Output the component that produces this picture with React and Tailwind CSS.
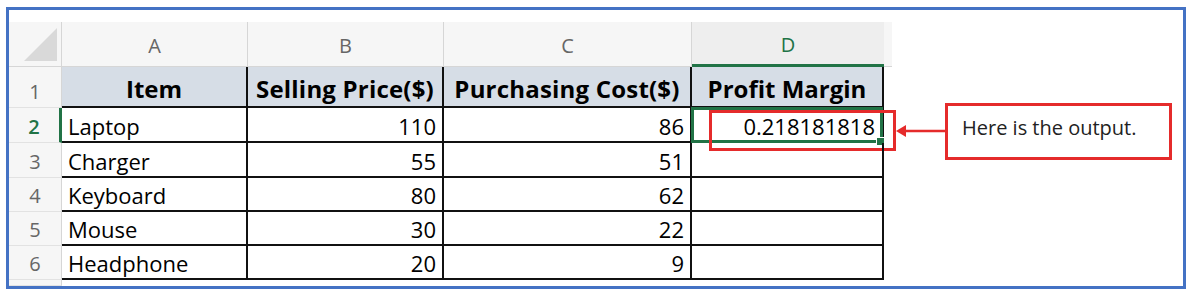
import React from "react";

/**
 * Spreadsheet screenshot — profit margin example with a callout
 * pointing at the computed D2 value.
 */
const rows = [
  { n: 2, item: "Laptop", price: 110, cost: 86, margin: "0.218181818", h: "h-[35px]" },
  { n: 3, item: "Charger", price: 55, cost: 51, h: "h-[35px]" },
  { n: 4, item: "Keyboard", price: 80, cost: 62, h: "h-[34px]" },
  { n: 5, item: "Mouse", price: 30, cost: 22, h: "h-[34px]" },
  { n: 6, item: "Headphone", price: 20, cost: 9, h: "h-[34px]" },
];

const font = { fontFamily: '"Open Sans", "Liberation Sans", sans-serif' };

const RowHead = ({ children, active, className = "" }) => (
  <div
    className={`w-[53px] shrink-0 flex items-end justify-center pb-[2px] leading-none bg-[#f6f6f6] border-b border-[#e2e2e2] text-[20px] font-normal ${
      active ? "text-[#217346] font-semibold border-r-[3px] border-r-[#217346]" : "text-[#666] border-r border-r-[#d6d6d6]"
    } ${className}`}
  >
    <span className="pb-[3px]">{children}</span>
  </div>
);

const App = () => {
  return (
    <div className="w-[1192px] h-[297px] bg-white pt-[7px] pl-[6px]" style={font}>
      <div className="w-[1180px] h-[282px] border-[3px] border-[#4472c4] flex items-start pt-[12px]">
        {/* Sheet */}
        <div className="flex flex-col h-full">
          {/* Column headers */}
          <div className="flex h-[45px] text-[20px] text-[#666]">
            <div className="w-[53px] relative bg-[#f6f6f6] border-r border-b border-[#d6d6d6]">
              <svg className="absolute right-[4px] bottom-[5px]" width="33" height="33" viewBox="0 0 33 33">
                <polygon points="33,0 33,33 0,33" fill="#d9d9d9" />
              </svg>
            </div>
            <div className="w-[186px] flex items-center justify-center pt-[4px] bg-[#f6f6f6] border-r border-b border-[#d6d6d6]">A</div>
            <div className="w-[196px] flex items-center justify-center pt-[4px] bg-[#f6f6f6] border-r border-b border-[#d6d6d6]">B</div>
            <div className="w-[248px] flex items-center justify-center pt-[4px] bg-[#f6f6f6] border-r border-b border-[#d6d6d6]">C</div>
            <div className="w-[192px] flex items-center justify-center pt-[4px] bg-[#eeeeee] border-b-[3px] border-[#217346] text-[#217346]">D</div>
            <div className="w-[8px] bg-[#f6f6f6] border-b border-[#d6d6d6]" />
          </div>

          {/* Row 1: headings */}
          <div className="flex h-[41px] font-bold text-[24px] leading-none text-black">
            <RowHead>1</RowHead>
            <div className="w-[186px] flex items-end justify-center pb-[5px] bg-[#d6dde6] border-r-2 border-b-2 border-[#111]">Item</div>
            <div className="w-[196px] flex items-end justify-center pb-[5px] bg-[#d6dde6] border-r-2 border-b-2 border-[#111] tracking-[0.2px]">Selling Price($)</div>
            <div className="w-[248px] flex items-end justify-center pb-[5px] bg-[#d6dde6] border-r-2 border-b-2 border-[#111] tracking-[0.2px]">Purchasing Cost($)</div>
            <div className="w-[192px] flex items-end justify-center pb-[5px] bg-[#d6dde6] border-r-2 border-b-2 border-[#111]">Profit Margin</div>
          </div>

          {/* Data rows */}
          {rows.map((r) => (
            <div key={r.n} className={`flex ${r.h} text-[22px] leading-none text-black`}>
              <RowHead active={r.n === 2}>{r.n}</RowHead>
              <div className="w-[186px] flex items-end pl-[6px] pb-[4px] border-r-2 border-b-2 border-[#111]">{r.item}</div>
              <div className="w-[196px] flex items-end justify-end pr-[6px] pb-[4px] border-r-2 border-b-2 border-[#111]">{r.price}</div>
              <div className="w-[248px] flex items-end justify-end pr-[6px] pb-[4px] border-r-2 border-b-2 border-[#111]">{r.cost}</div>
              <div className="w-[192px] relative flex items-end justify-end pr-[7px] pb-[4px] border-r-2 border-b-2 border-[#111]">
                {r.margin}
                {r.margin && (
                  <>
                    {/* Active cell selection */}
                    <div className="absolute -left-[1px] -top-[1px] w-[192px] h-[36px] border-[3px] border-[#217346]" />
                    <div className="absolute right-[-3px] bottom-[-5px] w-[9px] h-[9px] bg-[#217346] border border-white" />
                    {/* Red highlight */}
                    <div className="absolute left-[17px] top-[2px] w-[187px] h-[41px] border-[3px] border-[#e52b2b]" />
                  </>
                )}
              </div>
            </div>
          ))}

          <div className="flex flex-1">
            <RowHead />
          </div>
        </div>

        {/* Annotation */}
        <svg className="ml-[4px] mt-[99px] shrink-0" width="49" height="20" viewBox="0 0 49 20">
          <polygon points="0,10 10,4 10,16" fill="#e52b2b" />
          <line x1="8" y1="10" x2="49" y2="10" stroke="#e52b2b" strokeWidth="2.5" />
        </svg>
        <div className="mt-[81px] w-[227px] h-[57px] shrink-0 border-[3px] border-[#e52b2b] pl-[14px] pt-[10px] text-[20px] leading-[24px] text-[#222]">
          Here is the output.
        </div>
      </div>
    </div>
  );
};

export default App;
